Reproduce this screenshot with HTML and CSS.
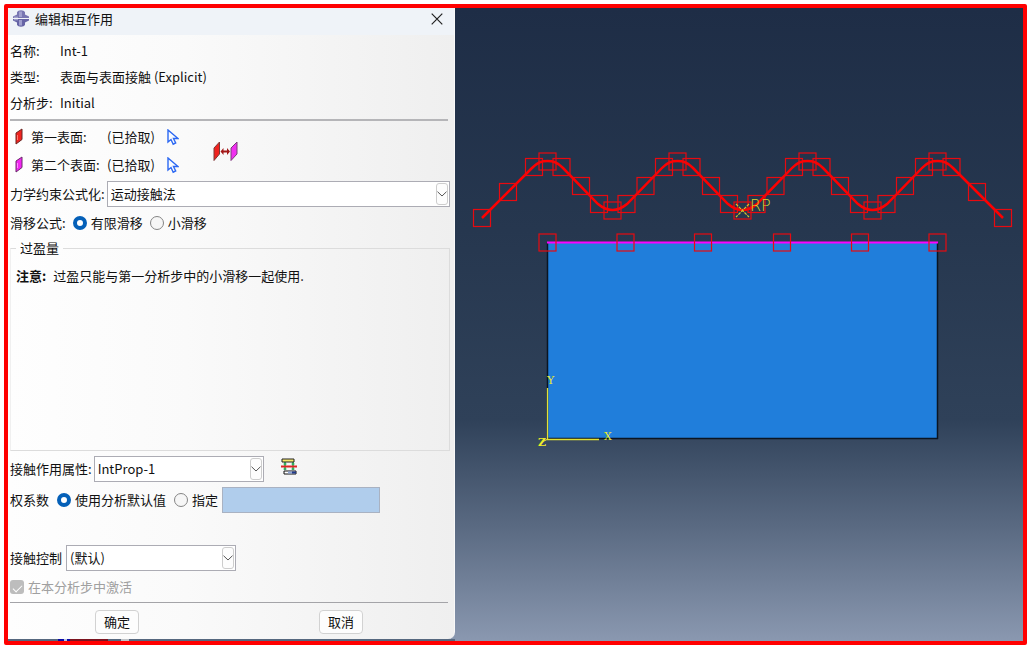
FILE: index.html
```html
<!DOCTYPE html>
<html lang="zh-CN">
<head>
<meta charset="utf-8">
<title>编辑相互作用</title>
<link rel="stylesheet" href="styles.css">
</head>
<body>
<main class="frame">
  <div class="side">
    <form class="dialog">
      <header class="titlebar">
        <svg class="app-icon" width="16" height="17" viewBox="0 0 16 17" aria-hidden="true">
          <path d="M0 8V6.500L4 4.500V2Q5 .3 8 .3T12 2v2.500l4 2V8z" fill="#7876b2"/>
          <path d="M0 9v1.500l4 2V15q1 1.700 4 1.700T12 15v-2.500l4-2V9z" fill="#6664a6"/>
          <path d="M6 1.500h3V7H6zM6 10h3v5.500H6z" fill="#a09fce"/>
          <path d="M1 6.800h4v1H1zM1 9.200h4v1H1z" fill="#b3b2d8"/>
        </svg>
        <h1 class="title">编辑相互作用</h1>
        <button class="close" type="button" aria-label="关闭">
          <svg width="12" height="12" viewBox="0 0 12 12"><path d="M.7.7l10.600 10.600M11.300.7.7 11.300" stroke="#222" stroke-width="1.200"/></svg>
        </button>
      </header>

      <div class="content">
        <dl class="info">
          <dt>名称:</dt><dd>Int-1</dd>
          <dt>类型:</dt><dd>表面与表面接触 (Explicit)</dd>
          <dt>分析步:</dt><dd>Initial</dd>
        </dl>
        <hr class="rule">

        <div class="surfaces">
          <div class="surface-list">
            <svg class="face" width="8" height="18" viewBox="0 0 8 18" aria-hidden="true"><path d="M1 5 7 1v10.500L1 16z" fill="#f0231f" stroke="#6a2522"/><path d="M2.500 7v5" stroke="#ff7a70"/></svg>
            <span>第一表面:</span><span>(已拾取)</span>
            <button class="pick" type="button" aria-label="拾取第一表面"><svg width="12" height="17" viewBox="0 0 12 17"><path d="M1 1v12l3-2.500 2.200 4.700 2.500-1.200-2.200-4.500H11z" fill="#f8fbff" stroke="#2c68f2" stroke-width="1.400"/></svg></button>
            <svg class="face" width="8" height="18" viewBox="0 0 8 18" aria-hidden="true"><path d="M1 5 7 1v10.500L1 16z" fill="#f126f1" stroke="#6b2a6b"/><path d="M2.500 7v5" stroke="#ff8bff"/></svg>
            <span>第二个表面:</span><span>(已拾取)</span>
            <button class="pick" type="button" aria-label="拾取第二个表面"><svg width="12" height="17" viewBox="0 0 12 17"><path d="M1 1v12l3-2.500 2.200 4.700 2.500-1.200-2.200-4.500H11z" fill="#f8fbff" stroke="#2c68f2" stroke-width="1.400"/></svg></button>
          </div>
          <button class="swap" type="button" aria-label="交换表面">
            <svg width="25" height="21" viewBox="0 0 25 21"><path d="M1 7 6.500 1v12L1 19.500z" fill="#f0231f" stroke="#7a3a38"/><path d="M18 7 24 1v12l-6 6.500z" fill="#f030f0" stroke="#7a3a7a"/><path d="M9 10.500h7" stroke="#a31818" stroke-width="2"/><path d="M7.500 10.500l3-3.500v7zM17 10.500l-3-3.500v7z" fill="#a31818"/></svg>
          </button>
        </div>

        <div class="row mech">
          <label for="mech">力学约束公式化:</label>
          <span class="combo grow">
            <select id="mech"><option>运动接触法</option></select>
            <span class="arrow"><svg width="10" height="6" viewBox="0 0 10 6"><path d="M.5.7 5 5 9.500.7" fill="none" stroke="#555"/></svg></span>
          </span>
        </div>

        <div class="row sliding" role="radiogroup" aria-labelledby="slide-label">
          <span id="slide-label">滑移公式:</span>
          <label class="choice"><input type="radio" name="slide" checked>有限滑移</label>
          <label class="choice"><input type="radio" name="slide">小滑移</label>
        </div>

        <fieldset class="group">
          <legend>过盈量</legend>
          <p class="note"><strong>注意:</strong>过盈只能与第一分析步中的小滑移一起使用.</p>
        </fieldset>

        <div class="row prop">
          <label for="prop">接触作用属性:</label>
          <span class="combo fixed">
            <select id="prop"><option>IntProp-1</option></select>
            <span class="arrow"><svg width="10" height="6" viewBox="0 0 10 6"><path d="M.5.7 5 5 9.500.7" fill="none" stroke="#555"/></svg></span>
          </span>
          <button class="create" type="button" aria-label="创建相互作用属性">
            <svg width="18" height="17" viewBox="0 0 18 17"><path d="M5 4v8M13 4v8" stroke="#17a84a" stroke-width="1.500"/><path d="M3.500 6h3M11.500 6h3M3.500 11h3M11.500 11h3" stroke="#17a84a"/><path d="M2 1h12v3H2z" fill="#f6e96b" stroke="#222"/><path d="M1 8.500h16" stroke="#dd2525" stroke-width="2"/><path d="M4 13h12v3H4z" fill="#fff" stroke="#111"/><path d="M8 13.500h4v2H8z" fill="#8fa5d8"/><path d="M12 13.500h4v2h-4z" fill="#203a8c"/></svg>
          </button>
        </div>

        <div class="row weight" role="radiogroup" aria-labelledby="weight-label">
          <span id="weight-label">权系数</span>
          <label class="choice"><input type="radio" name="weight" checked>使用分析默认值</label>
          <label class="choice"><input type="radio" name="weight">指定</label>
          <input class="value" type="text" aria-label="权系数值" disabled>
        </div>

        <div class="row control">
          <label for="control">接触控制</label>
          <span class="combo fixed">
            <select id="control"><option>(默认)</option></select>
            <span class="arrow"><svg width="10" height="6" viewBox="0 0 10 6"><path d="M.5.7 5 5 9.500.7" fill="none" stroke="#555"/></svg></span>
          </span>
        </div>

        <label class="active"><input type="checkbox" checked disabled>在本分析步中激活</label>
        <hr class="rule thin">
        <footer class="actions">
          <button class="push" type="submit">确定</button>
          <button class="push" type="button">取消</button>
        </footer>
      </div>
    </form>
    <div class="under"></div>
  </div>

  <section class="viewport" aria-label="模型视图">
    <svg class="scene" viewBox="455 8 568 633">
      <defs><rect id="n" x="-8.500" y="-8.500" width="17" height="17"/></defs>
      <rect x="548" y="242" width="390" height="197" fill="#207edb"/>
      <path d="M547.500 243v196M937.500 243v196M547 438.500h391" stroke="#0b1522" stroke-width="1.500"/>
      <path d="M547.500 388v51.500H599" fill="none" stroke="#e2e235" stroke-width="1.300"/>
      <g class="axis">
        <text x="547" y="384">Y</text><text x="604" y="440">X</text><text class="bold" x="538" y="446">Z</text>
      </g>
      <path d="M542 442l6-3" stroke="#eded2a"/>
      <path d="M547 242.500h391" stroke="#f0f" stroke-width="2"/>
      <path class="curve" d="M482 218 532 168C538 162 542 161 547.500 161S557 162 563 168L598 204C604 209 608 210 612.500 210S621 209 627 204L662 168C668 162 672 161 677.500 161S687 162 693 168L728 204C734 209 738 210 742.500 210S751 209 757 204L792 168C798 162 802 161 807.500 161S817 162 823 168L858 204C864 209 868 210 872.500 210S881 209 887 204L922 168C928 162 932 161 937.500 161S947 162 953 168L1003 218"/>
      <g class="nodes">
        <use href="#n" x="482" y="218"/><use href="#n" x="508" y="192"/><use href="#n" x="534" y="167"/><use href="#n" x="547.500" y="161.500"/><use href="#n" x="561.500" y="167"/><use href="#n" x="581" y="186"/><use href="#n" x="599" y="204"/><use href="#n" x="612.500" y="210.500"/><use href="#n" x="626.500" y="204"/><use href="#n" x="645.500" y="186"/>
        <use href="#n" x="664" y="167"/><use href="#n" x="677.500" y="161.500"/><use href="#n" x="691.500" y="167"/><use href="#n" x="711" y="186"/><use href="#n" x="729" y="204"/><use href="#n" x="742.500" y="210.500"/><use href="#n" x="756.500" y="204"/><use href="#n" x="775.500" y="186"/>
        <use href="#n" x="794" y="167"/><use href="#n" x="807.500" y="161.500"/><use href="#n" x="821.500" y="167"/><use href="#n" x="840" y="186"/><use href="#n" x="859" y="204"/><use href="#n" x="872.500" y="210.500"/><use href="#n" x="886.500" y="204"/><use href="#n" x="905" y="186"/>
        <use href="#n" x="924" y="167"/><use href="#n" x="937.500" y="161.500"/><use href="#n" x="951.500" y="167"/><use href="#n" x="977" y="192"/><use href="#n" x="1003" y="218"/>
        <use href="#n" x="547.500" y="242.500"/><use href="#n" x="625.500" y="242.500"/><use href="#n" x="703" y="242.500"/><use href="#n" x="782" y="242.500"/><use href="#n" x="860" y="242.500"/><use href="#n" x="937.500" y="242.500"/>
      </g>
      <path d="M736 204l13 13M749 204l-13 13" stroke="#d2c62c" stroke-width="1.200" stroke-dasharray="3 1"/>
      <text class="rp" x="750" y="211">RP</text>
    </svg>
  </section>
</main>
</body>
</html>
```

FILE: styles.css
```css
* { box-sizing: border-box; }

body {
  margin: 0;
  padding: 4px 1px 3px 4px;
  background: #fff;
  color: #111;
  font: 13px/20px "Noto Sans CJK SC", sans-serif;
}

button, select, input { font: inherit; color: inherit; margin: 0; }

.frame {
  display: flex;
  min-height: calc(100vh - 7px);
  border: 4px solid #f00;
  border-radius: 2px;
  background: linear-gradient(#1e2d46 0%, #26374f 35%, #2f4159 65%, #5a6a82 82%, #8a98b0 100%);
}

.side { display: flex; flex-direction: column; flex: 0 0 447px; }

.under {
  height: 2px;
  background: linear-gradient(90deg, #56687f 50px, #0b0ba8 50px 56px, #b8c4e0 56px 59px, #0b0ba8 59px 62px, #7c1420 62px 100px, #56687f 100px 113px, #c0c4c8 113px 121px, #56687f 121px);
}

.dialog {
  display: flex;
  flex: 1;
  flex-direction: column;
  overflow: hidden;
  border-right: 1px solid #f8f8f8;
  border-radius: 0 0 7px 0;
  background: linear-gradient(90deg, #fefefe, #fafafa 40%, #efefef);
}

.titlebar {
  display: flex;
  align-items: center;
  height: 27px;
  padding: 0 11px 6px 5px;
  background: #eff3f8;
}

.title { margin: 0 auto 0 6px; font-size: 13px; font-weight: 400; }

.close, .pick, .swap, .create { display: grid; padding: 0; border: 0; background: none; }

.content { display: flex; flex: 1; flex-direction: column; padding: 3px 0 0 2px; }

.info {
  display: grid;
  grid-template-columns: 50px 1fr;
  margin: 0;
  line-height: 26px;
}

.info dd { margin: 0; }

.rule {
  width: auto;
  height: 2px;
  margin: 3px 6px 2px 0;
  border: 0;
  background: #b5b5b8;
}

.rule.thin { height: 1px; margin: 3px 6px 0 0; background: #a4a4a8; }

.surfaces { display: flex; align-items: center; gap: 34px; }

.surface-list {
  display: grid;
  grid-template-columns: 21px 76px 60px 12px;
  align-items: center;
  line-height: 28px;
}

.face { margin-left: 5px; }

.row { display: flex; align-items: center; }

.mech { margin: 2px 4px 0 0; gap: 2px; }

.combo { position: relative; display: flex; }
.combo.grow { flex: 1; }
.combo.fixed { width: 170px; }

.combo select {
  width: 100%;
  height: 26px;
  padding: 0 20px 0 3px;
  appearance: none;
  border: 1px solid #acacb4;
  border-radius: 0;
  background: #fff;
}

.arrow {
  position: absolute;
  top: 2px;
  right: 2px;
  bottom: 2px;
  display: grid;
  place-items: center;
  width: 12px;
  border: 1px solid #cdcdcd;
  border-radius: 3px;
  background: #fdfdfd;
  pointer-events: none;
}

.sliding { min-height: 31px; gap: 7px; }

.choice { display: flex; align-items: center; gap: 4px; }

.choice input {
  width: 14px;
  height: 14px;
  appearance: none;
  border: 1px solid #858585;
  border-radius: 50%;
  background: #f6f6f6;
}

.choice input:checked { border: 4px solid #0560b8; background: #fff; }

.group {
  flex: 1;
  min-width: 0;
  margin: 0 4px 0 0;
  padding: 8px 5px 0;
  border: 1px solid #dcdcdc;
  border-left-color: #f0f0f0;
}

.group legend { padding: 0 4px; }

.note { display: flex; gap: 7px; margin: 0; }

.prop { margin-top: 5px; gap: 2px; }
.create { margin: 0 0 5px 14px; }

.weight { margin-top: 5px; gap: 8px; }
.weight .value {
  width: 158px;
  height: 26px;
  margin-left: -4px;
  border: 1px solid #a9b2c2;
  background: #b0cdec;
}

.control { margin-top: 32px; gap: 4px; }

.active {
  display: flex;
  align-items: center;
  gap: 4px;
  min-height: 24px;
  margin-top: 4px;
  color: #a0a0a0;
}

.active input {
  display: grid;
  place-items: center;
  width: 14px;
  height: 14px;
  appearance: none;
  border-radius: 3px;
  background: #bdbdbd;
}

.active input::after {
  content: "";
  width: 8px;
  height: 4px;
  border: solid #fff;
  border-width: 0 0 1px 1px;
  rotate: -45deg;
}

.actions { display: flex; gap: 180px; padding: 7px 0 5px 85px; }

.push {
  width: 44px;
  height: 24px;
  padding: 0;
  border: 1px solid #d2d2d2;
  border-radius: 4px;
  background: #fdfdfd;
}

.viewport { display: flex; flex: 1; min-width: 0; }
.scene { width: 100%; height: auto; }

.curve { fill: none; stroke: #f00; stroke-width: 2.5px; }
.nodes { fill: none; stroke: #e80a10; stroke-width: 1.2px; }
.axis { fill: #eded2a; font: 11px "DejaVu Serif", serif; }
.axis .bold { font-weight: 700; }
.rp { fill: #d8d82c; font: 200 16px "DejaVu Sans", sans-serif; }
```
